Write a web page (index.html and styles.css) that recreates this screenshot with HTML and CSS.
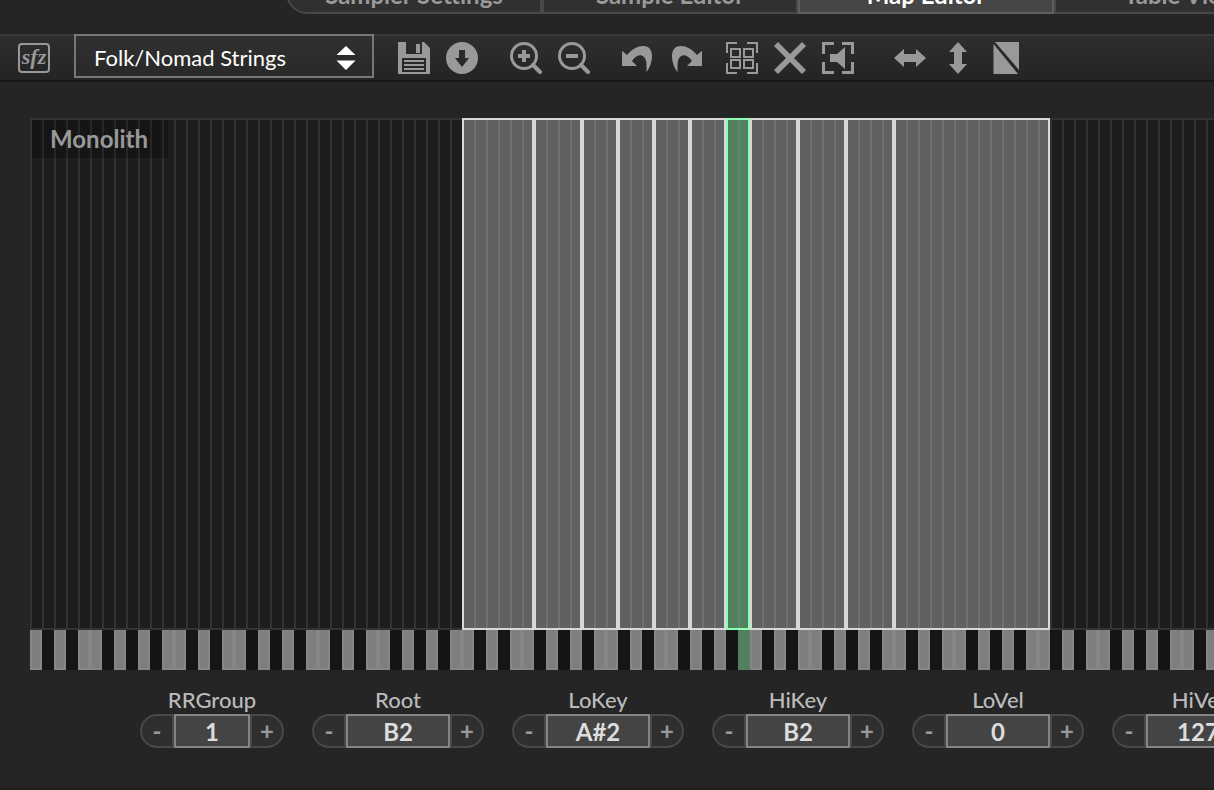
FILE: index.html
```html
<!DOCTYPE html>
<html lang="en">
<head>
<meta charset="utf-8">
<title>Map Editor</title>
<link rel="stylesheet" href="styles.css">
</head>
<body>
<nav class="tabs">
  <button class="tab">Sampler Settings</button>
  <button class="tab">Sample Editor</button>
  <button class="tab active">Map Editor</button>
  <button class="tab">Table View</button>
</nav>

<div class="toolbar">
  <button class="sfz">sfz</button>
  <div class="picker">
    <select class="picker-select" aria-label="Sample map"><option>Folk/Nomad Strings</option></select>
    <svg class="picker-arrows" viewBox="0 0 20 24"><path d="M10 0 19.500 9H.5zM.5 14.500h19L10 24z"/></svg>
  </div>
  <div class="tools">
    <button class="tool" aria-label="Save"><svg viewBox="0 0 32 32"><path fill-rule="evenodd" d="M0 0h8v12h16V0h2l6 6v26H0zM4 16v14h24V16zM18 2h4v9h-4z"/><path d="M6 18h20v2H6zm0 4h20v2H6zm0 4h20v2H6z"/></svg></button>
    <button class="tool" aria-label="Import"><svg viewBox="0 0 32 32"><path fill-rule="evenodd" d="M16 0a16 16 0 1 1 0 32 16 16 0 0 1 0-32zM13 8v8H9l7 9 7-9h-4V8z"/></svg></button>
  </div>
  <div class="tools">
    <button class="tool" aria-label="Zoom in"><svg viewBox="0 0 32 32"><circle class="line" cx="14" cy="14" r="12.500"/><path class="handle" d="m23 23 7 7"/><path d="M12 8h4v4h4v4h-4v4h-4v-4H8v-4h4z"/></svg></button>
    <button class="tool" aria-label="Zoom out"><svg viewBox="0 0 32 32"><circle class="line" cx="14" cy="14" r="12.500"/><path class="handle" d="m23 23 7 7"/><path d="M8 12h12v4H8z"/></svg></button>
  </div>
  <div class="tools history">
    <button class="tool" aria-label="Undo"><svg viewBox="0 0 32 32"><path d="M0 8.700 5 13C10 7 16 4 21 4c7 0 9 5 9 10 0 7-3 13-5.500 16 0-6 .5-12-2.500-15-4-4-9-1-12 4l5 5H0z"/></svg></button>
    <button class="tool" aria-label="Redo"><svg viewBox="0 0 32 32"><path d="M32 8.700 27 13C22 7 16 4 11 4c-7 0-9 5-9 10 0 7 3 13 5.500 16 0-6-.5-12 2.500-15 4-4 9-1 12 4l-5 5h15z"/></svg></button>
  </div>
  <div class="tools selection">
    <button class="tool" aria-label="Select all"><svg viewBox="0 0 32 32"><path class="thin" d="M1 11V1h10M21 1h10v10M31 21v10H21M11 31H1V21M5 7h9v8H5zM18 7h9v8h-9zM5 18h9v8H5zM18 18h9v8h-9z"/></svg></button>
    <button class="tool" aria-label="Delete"><svg viewBox="0 0 32 32"><path d="m4 0 12 12L28 0l4 4-12 12 12 12-4 4-12-12L4 32l-4-4 12-12L0 4z"/></svg></button>
    <button class="tool" aria-label="Preview selection"><svg viewBox="0 0 32 32"><path class="frame" d="M1.500 12V1.500H12M20 1.500h10.500V12M30.500 20v10.500H20M12 30.500H1.500V20"/><path d="M8 12h7l8-7v22l-8-7H8z"/></svg></button>
  </div>
  <div class="tools">
    <button class="tool" aria-label="Extend keys"><svg viewBox="0 0 32 32"><path d="m0 16 10-9v5h12V7l10 9-10 9v-5H10v5z"/></svg></button>
    <button class="tool" aria-label="Extend velocity"><svg viewBox="0 0 32 32"><path d="m16 0 9 10h-5v12h5l-9 10-9-10h5V10H7z"/></svg></button>
    <button class="tool" aria-label="Crossfade"><svg viewBox="0 0 32 32"><path d="M5 0h24v28zM3.500 2 28 32H3.500z"/></svg></button>
  </div>
</div>

<main class="editor">
  <div class="map">
    <div class="zones">
      <div class="zone span-6"></div>
      <div class="zone span-4"></div>
      <div class="zone span-3"></div>
      <div class="zone span-3"></div>
      <div class="zone span-3"></div>
      <div class="zone span-3"></div>
      <div class="zone span-2 selected"></div>
      <div class="zone span-4"></div>
      <div class="zone span-4"></div>
      <div class="zone span-4"></div>
      <div class="zone span-13"></div>
    </div>
    <div class="map-label">Monolith</div>
  </div>
  <div class="keyboard"><div class="key-on"></div></div>
</main>

<form class="params">
  <div class="param small"><label for="rr">RRGroup</label><div class="stepper"><button type="button">-</button><input id="rr" value="1"><button type="button">+</button></div></div>
  <div class="param"><label for="root">Root</label><div class="stepper"><button type="button">-</button><input id="root" value="B2"><button type="button">+</button></div></div>
  <div class="param"><label for="lokey">LoKey</label><div class="stepper"><button type="button">-</button><input id="lokey" value="A#2"><button type="button">+</button></div></div>
  <div class="param"><label for="hikey">HiKey</label><div class="stepper"><button type="button">-</button><input id="hikey" value="B2"><button type="button">+</button></div></div>
  <div class="param"><label for="lovel">LoVel</label><div class="stepper"><button type="button">-</button><input id="lovel" value="0"><button type="button">+</button></div></div>
  <div class="param"><label for="hivel">HiVel</label><div class="stepper"><button type="button">-</button><input id="hivel" value="127"><button type="button">+</button></div></div>
</form>
</body>
</html>
```

FILE: styles.css
```css
* { box-sizing: border-box; }

body {
  margin: 0;
  min-height: 100vh;
  display: flex;
  flex-direction: column;
  overflow: hidden;
  background: #252525;
  border-bottom: 2px solid #1e1e1e;
  font-family: Lato, sans-serif;
  color: #bbb;
}

button, input, select { font-family: inherit; margin: 0; }

.tabs {
  display: flex;
  margin: -28px 0 20px 286px;
}
.tab {
  flex: 0 0 256px;
  height: 42px;
  padding: 4px 0 0;
  border: 2px solid #484848;
  background: #303030;
  color: #999;
  font-size: 24px;
  font-weight: 700;
  line-height: 28px;
}
.tab:first-child { border-radius: 21px 0 0 21px; }
.tab.active { background: #464646; border-color: #606060; color: #fff; }

.toolbar {
  display: flex;
  align-items: center;
  height: 48px;
  padding-left: 18px;
  border-top: 2px solid #383838;
  border-bottom: 2px solid #181818;
  background: linear-gradient(#2e2e2e, #242424);
}
.sfz {
  display: flex;
  justify-content: center;
  width: 32px;
  height: 30px;
  flex: none;
  padding: 0;
  border: 2px solid #999;
  border-radius: 4px;
  background: none;
  color: #999;
  font: italic 700 22px/24px "Liberation Serif", serif;
}
.picker {
  display: grid;
  align-self: flex-start;
  flex: 0 0 300px;
  height: 44px;
  margin: -2px 24px 0;
  align-items: center;
}
.picker-select, .picker-arrows { grid-area: 1 / 1; }
.picker-select {
  appearance: none;
  width: 100%;
  height: 44px;
  padding: 2px 18px 0;
  border: 2px solid #777;
  border-radius: 0;
  background: linear-gradient(#303030, #292929);
  color: #fff;
  font-size: 22px;
  font-weight: 400;
  text-rendering: optimizeLegibility;
}
.picker-arrows {
  justify-self: end;
  width: 20px;
  height: 24px;
  margin: 4px 18px 0 0;
  fill: #fff;
  pointer-events: none;
}
.tools { display: flex; flex: none; gap: 16px; margin-right: 32px; }
.tools.history { margin-right: 24px; }
.tools.selection { margin-right: 40px; }
.tool { width: 32px; height: 32px; padding: 0; border: 0; background: none; }
.tool svg { display: block; width: 32px; height: 32px; fill: #999; }
.tool .line, .tool .handle, .tool .thin, .tool .frame { fill: none; stroke: #999; stroke-width: 3; }
.tool .handle { stroke-width: 4; stroke-linecap: round; }
.tool .thin { stroke-width: 2; }

.editor {
  flex: 1;
  display: flex;
  flex-direction: column;
  margin: 36px 0 0 30px;
  overflow: hidden;
}
.map {
  flex: 1;
  display: grid;
  grid-template-columns: repeat(128, 12px);
  grid-template-rows: 100%;
  background:
    linear-gradient(#333, #333) top / 100% 2px no-repeat,
    linear-gradient(#333, #333) bottom / 100% 2px no-repeat,
    repeating-linear-gradient(90deg, #333 0 2px, #1d1d1d 2px 12px);
}
.zones {
  grid-area: 1 / 37 / 2 / 86;
  display: grid;
  grid-template-columns: repeat(49, 12px);
}
.zone { border: 2px solid #d8d8d8; background: rgba(255, 255, 255, 0.3); background-clip: padding-box; }
.span-2 { grid-column: span 2; }
.span-3 { grid-column: span 3; }
.span-4 { grid-column: span 4; }
.span-6 { grid-column: span 6; }
.span-13 { grid-column: span 13; }
.zone.selected { border-color: #90ffb1; background-color: rgba(125, 215, 152, 0.54); }
.map-label {
  grid-area: 1 / 1 / 2 / 13;
  align-self: start;
  margin: 2px 6px 0 2px;
  padding-left: 18px;
  background: rgba(0, 0, 0, 0.25);
  color: #999;
  font-size: 24px;
  font-weight: 700;
  line-height: 38px;
}

/* One octave is twelve 12px keys, starting at C */
.keyboard {
  display: grid;
  grid-template-columns: repeat(128, 12px);
  height: 40px;
  background:
    linear-gradient(90deg,
      transparent 12px, #151515 12px 24px, transparent 24px 36px, #151515 36px 48px,
      transparent 48px 72px, #151515 72px 84px, transparent 84px 96px, #151515 96px 108px,
      transparent 108px 120px, #151515 120px 132px, transparent 132px) 0 0 / 144px 100%,
    linear-gradient(#868686, #868686) bottom / 100% 2px no-repeat,
    repeating-linear-gradient(90deg, #868686 0 2px, #7e7e7e 2px 10px, #868686 10px 12px);
}
.key-on { grid-column: 60; background: #52805f; }

.params {
  display: flex;
  gap: 28px;
  padding: 16px 0 40px 140px;
}
.param { flex: none; width: 172px; }
.param.small { width: 144px; }
.param label { display: block; text-align: center; font-size: 22px; font-weight: 500; line-height: 28px; }
.stepper { display: flex; height: 34px; }
.stepper button {
  flex: 0 0 34px;
  padding: 0;
  border: 2px solid #484848;
  background: #2f2f2f;
  color: #999;
  font-size: 24px;
  font-weight: 700;
  line-height: 28px;
}
.stepper button:first-child { border-radius: 17px 0 0 17px; }
.stepper button:last-child { border-radius: 0 17px 17px 0; }
.stepper input {
  flex: 1;
  min-width: 0;
  padding: 0;
  border: 2px solid #858585;
  border-radius: 0;
  background: #444;
  color: #ddd;
  font-size: 24px;
  font-weight: 700;
  text-align: center;
}
```
